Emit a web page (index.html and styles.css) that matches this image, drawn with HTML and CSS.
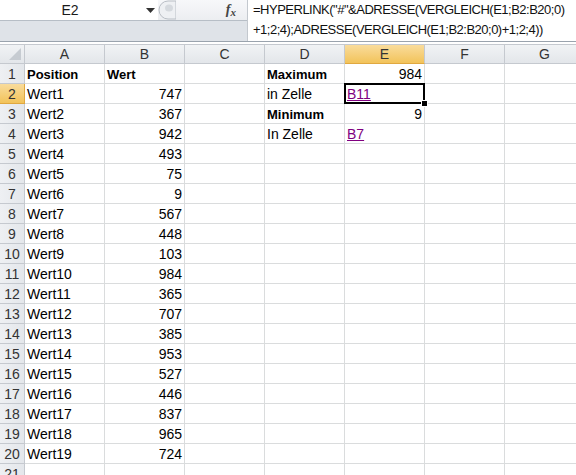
FILE: index.html
```html
<!DOCTYPE html>
<html>
<head>
<meta charset="utf-8">
<link rel="stylesheet" href="styles.css">
</head>
<body>
<div class="app">
  <div class="fbar">
    <div class="fleft">
      <div class="fleft-top">
        <div class="namebox">
          <span class="name">E2</span>
          <svg class="dd" width="9" height="5" viewBox="0 0 9 5"><polygon points="0,0 9,0 4.5,5" fill="#333"/></svg>
        </div>
        <div class="splitter">
          <svg width="18" height="20" viewBox="0 0 18 20">
            <path d="M10,1 A9,9 0 0 0 10,19 L18,19 L18,1 Z" fill="#eef0f3" stroke="#b9bec5" stroke-width="1"/>
            <ellipse cx="11" cy="8" rx="4" ry="3.5" fill="#d5d9de"/>
          </svg>
        </div>
        <div class="fx"><i>f</i><i class="x">x</i></div>
      </div>
      <div class="fleft-bottom"></div>
    </div>
    <div class="formula">
      <div class="fline">=HYPERLINK("#"&amp;ADRESSE(VERGLEICH(E1;B2:B20;0)</div>
      <div class="fline">+1;2;4);ADRESSE(VERGLEICH(E1;B2:B20;0)+1;2;4))</div>
    </div>
  </div>
  <div class="sep"></div>
  <div class="sheet">
    <div class="hd corner"><svg width="14" height="14" viewBox="0 0 14 14"><polygon points="13,1 13,13 1,13" fill="#c6cbd1"/></svg></div>
    <div class="hd col">A</div>
    <div class="hd col">B</div>
    <div class="hd col">C</div>
    <div class="hd col">D</div>
    <div class="hd col sel">E</div>
    <div class="hd col">F</div>
    <div class="hd col">G</div>

    <div class="hd row">1</div><div class="c b">Position</div><div class="c b">Wert</div><div class="c"></div><div class="c b">Maximum</div><div class="c n">984</div><div class="c"></div><div class="c"></div>
    <div class="hd row sel">2</div><div class="c">Wert1</div><div class="c n">747</div><div class="c"></div><div class="c">in Zelle</div><div class="c active"><span class="link">B11</span><div class="selbox"></div><div class="handle"></div></div><div class="c"></div><div class="c"></div>
    <div class="hd row">3</div><div class="c">Wert2</div><div class="c n">367</div><div class="c"></div><div class="c b">Minimum</div><div class="c n">9</div><div class="c"></div><div class="c"></div>
    <div class="hd row">4</div><div class="c">Wert3</div><div class="c n">942</div><div class="c"></div><div class="c">In Zelle</div><div class="c"><span class="link">B7</span></div><div class="c"></div><div class="c"></div>
    <div class="hd row">5</div><div class="c">Wert4</div><div class="c n">493</div><div class="c"></div><div class="c"></div><div class="c"></div><div class="c"></div><div class="c"></div>
    <div class="hd row">6</div><div class="c">Wert5</div><div class="c n">75</div><div class="c"></div><div class="c"></div><div class="c"></div><div class="c"></div><div class="c"></div>
    <div class="hd row">7</div><div class="c">Wert6</div><div class="c n">9</div><div class="c"></div><div class="c"></div><div class="c"></div><div class="c"></div><div class="c"></div>
    <div class="hd row">8</div><div class="c">Wert7</div><div class="c n">567</div><div class="c"></div><div class="c"></div><div class="c"></div><div class="c"></div><div class="c"></div>
    <div class="hd row">9</div><div class="c">Wert8</div><div class="c n">448</div><div class="c"></div><div class="c"></div><div class="c"></div><div class="c"></div><div class="c"></div>
    <div class="hd row">10</div><div class="c">Wert9</div><div class="c n">103</div><div class="c"></div><div class="c"></div><div class="c"></div><div class="c"></div><div class="c"></div>
    <div class="hd row">11</div><div class="c">Wert10</div><div class="c n">984</div><div class="c"></div><div class="c"></div><div class="c"></div><div class="c"></div><div class="c"></div>
    <div class="hd row">12</div><div class="c">Wert11</div><div class="c n">365</div><div class="c"></div><div class="c"></div><div class="c"></div><div class="c"></div><div class="c"></div>
    <div class="hd row">13</div><div class="c">Wert12</div><div class="c n">707</div><div class="c"></div><div class="c"></div><div class="c"></div><div class="c"></div><div class="c"></div>
    <div class="hd row">14</div><div class="c">Wert13</div><div class="c n">385</div><div class="c"></div><div class="c"></div><div class="c"></div><div class="c"></div><div class="c"></div>
    <div class="hd row">15</div><div class="c">Wert14</div><div class="c n">953</div><div class="c"></div><div class="c"></div><div class="c"></div><div class="c"></div><div class="c"></div>
    <div class="hd row">16</div><div class="c">Wert15</div><div class="c n">527</div><div class="c"></div><div class="c"></div><div class="c"></div><div class="c"></div><div class="c"></div>
    <div class="hd row">17</div><div class="c">Wert16</div><div class="c n">446</div><div class="c"></div><div class="c"></div><div class="c"></div><div class="c"></div><div class="c"></div>
    <div class="hd row">18</div><div class="c">Wert17</div><div class="c n">837</div><div class="c"></div><div class="c"></div><div class="c"></div><div class="c"></div><div class="c"></div>
    <div class="hd row">19</div><div class="c">Wert18</div><div class="c n">965</div><div class="c"></div><div class="c"></div><div class="c"></div><div class="c"></div><div class="c"></div>
    <div class="hd row">20</div><div class="c">Wert19</div><div class="c n">724</div><div class="c"></div><div class="c"></div><div class="c"></div><div class="c"></div><div class="c"></div>
    <div class="hd row">21</div><div class="c"></div><div class="c"></div><div class="c"></div><div class="c"></div><div class="c"></div><div class="c"></div><div class="c"></div>
  </div>
</div>
</body>
</html>
```
FILE: styles.css
```css
html, body {
  margin: 0;
  padding: 0;
  background: #ffffff;
  overflow: hidden;
}
body {
  width: 576px;
  height: 475px;
  font-family: "Liberation Sans", Arial, sans-serif;
  font-size: 14px;
  color: #000;
}
.app {
  display: flex;
  flex-direction: column;
}
.fbar {
  display: flex;
  height: 41px;
  border-bottom: 1px solid #9aa3ad;
}
.fleft {
  width: 247px;
  flex-shrink: 0;
  display: flex;
  flex-direction: column;
  border-right: 1px solid #c3c8ce;
}
.fleft-top {
  height: 20px;
  display: flex;
  border-bottom: 1px solid #b7bec6;
  background: linear-gradient(#f7f8fa, #eceef1);
}
.namebox {
  width: 158px;
  background: #fff;
  display: flex;
  align-items: center;
  position: relative;
}
.name {
  width: 140px;
  text-align: center;
  color: #1a1a1a;
  font-size: 14px;
}
.dd {
  margin-left: 6px;
}
.splitter {
  width: 18px;
  display: flex;
  align-items: center;
}
.fx {
  flex: 1;
  display: flex;
  justify-content: flex-end;
  align-items: center;
  padding-right: 11px;
  font-family: "Liberation Serif", serif;
  font-weight: bold;
  font-size: 14px;
  color: #444;
}
.fx .x {
  font-size: 11px;
  margin-top: 3px;
}
.fleft-bottom {
  flex: 1;
  background: #dfe3e8;
}
.formula {
  flex: 1;
  min-width: 0;
  padding-left: 5px;
  background: #fff;
  display: flex;
  flex-direction: column;
  white-space: nowrap;
  overflow: hidden;
}
.fline {
  height: 20px;
  line-height: 20px;
  font-size: 13px;
  letter-spacing: -0.5px;
  color: #111;
}
.sep {
  height: 2px;
  background: #fff;
}
.sheet {
  display: grid;
  grid-template-columns: 25px repeat(7, 80px);
  grid-auto-rows: 20px;
}
.hd {
  box-sizing: border-box;
  background: linear-gradient(#f1f3f5, #e3e6ea);
  color: #333;
  border-right: 1px solid #c5c9cf;
  border-bottom: 1px solid #c5c9cf;
  display: flex;
  align-items: center;
  justify-content: center;
  font-size: 14px;
}
.hd.col {
  border-top: 1px solid #c5c9cf;
}
.corner {
  border-top: 1px solid #c5c9cf;
  justify-content: flex-end;
  align-items: flex-end;
  padding: 0 2px 2px 0;
}
.corner svg {
  display: block;
}
.hd.row {
  background: linear-gradient(90deg, #eef0f3, #e4e7eb);
}
.hd.sel {
  background: linear-gradient(#f9dc9c, #f2c35a);
  border-bottom-color: #e0a840;
  color: #333;
}
.hd.row.sel {
  background: linear-gradient(#f9dc9c, #f2c35a);
  border-right-color: #e0a840;
}
.c {
  box-sizing: border-box;
  border-right: 1px solid #dadcdd;
  border-bottom: 1px solid #dadcdd;
  padding: 1px 2px 0 2px;
  line-height: 19px;
  white-space: nowrap;
  overflow: visible;
  position: relative;
}
.c.b {
  font-weight: bold;
  font-size: 13px;
}
.c.n {
  text-align: right;
  padding-right: 2px;
}
.link {
  color: #800080;
  text-decoration: underline;
}
.selbox {
  position: absolute;
  left: -1px;
  top: -1px;
  right: -1px;
  bottom: -1px;
  border: 2px solid #000;
}
.handle {
  position: absolute;
  right: -4px;
  bottom: -4px;
  width: 5px;
  height: 5px;
  background: #000;
  border: 1px solid #fff;
  z-index: 2;
}
```
